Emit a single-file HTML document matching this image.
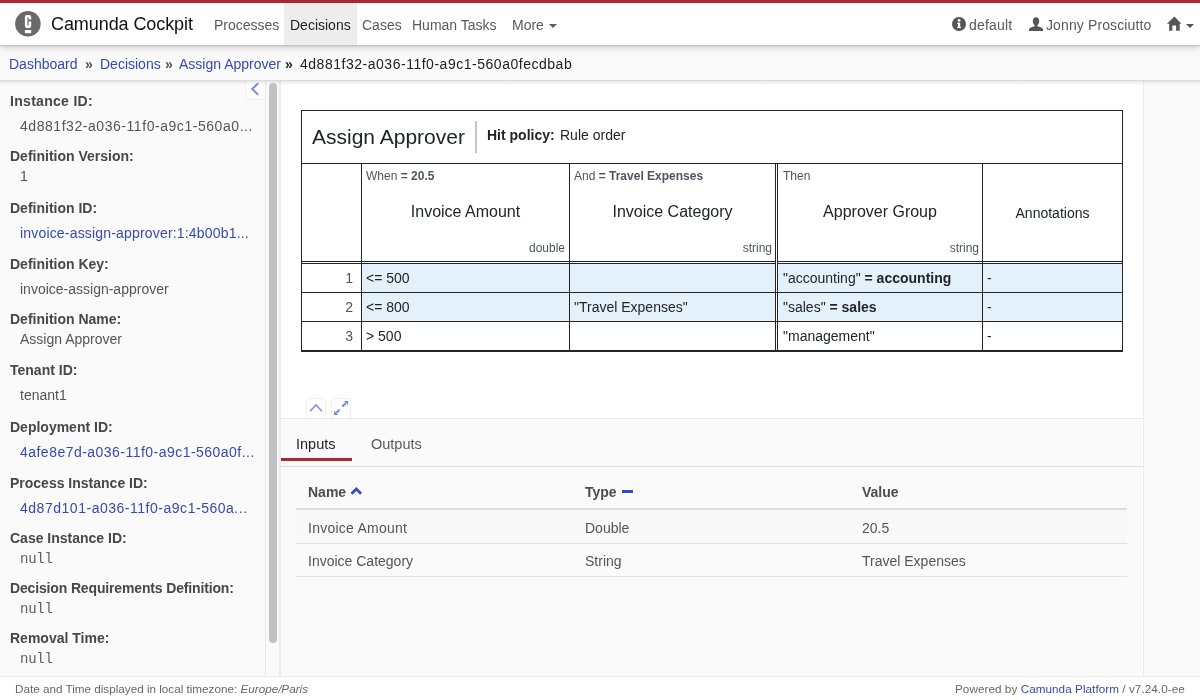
<!DOCTYPE html>
<html><head><meta charset="utf-8"><title>Camunda Cockpit</title>
<style>
html,body{margin:0;padding:0}
body{width:1200px;height:700px;overflow:hidden;position:relative;font-family:"Liberation Sans",sans-serif;background:#f9f9f9}
.t{position:absolute;white-space:nowrap;line-height:1;font-family:"Liberation Sans",sans-serif;will-change:transform}
</style></head><body>
<div style="position:absolute;left:0px;top:0px;width:1200px;height:700px;background:#fafafa"></div>
<div style="position:absolute;left:281px;top:80px;width:862px;height:338px;background:#fff"></div>
<div style="position:absolute;left:1142px;top:80px;width:1px;height:596px;background:#fff"></div>
<div style="position:absolute;left:1143px;top:80px;width:1px;height:596px;background:#ebebeb"></div>
<div style="position:absolute;left:265px;top:80px;width:1px;height:596px;background:#e8e8e8"></div>
<div style="position:absolute;left:279px;top:80px;width:2px;height:596px;background:#ececec"></div>
<div style="position:absolute;left:269px;top:83px;width:8px;height:560px;background:#c1c1c1;border-radius:4px"></div>
<div style="position:absolute;left:281px;top:418px;width:862px;height:1px;background:#e8e8e8"></div>
<div style="position:absolute;left:281px;top:466px;width:862px;height:1px;background:#dedede"></div>
<div style="position:absolute;left:0px;top:676px;width:1200px;height:24px;background:#fff;border-top:1px solid #e8e8e8;box-sizing:border-box"></div>
<div style="position:absolute;left:245px;top:80px;width:20px;height:20px;background:#fdfdfd;border-left:1px solid #eee;border-bottom:1px solid #eee;border-bottom-left-radius:4px;box-sizing:border-box"></div>
<svg style="position:absolute;left:250px;top:82px" width="10" height="14" viewBox="0 0 10 14"><path d="M8.2 1.2 L2.2 7 L8.2 12.8" fill="none" stroke="#7b8ed8" stroke-width="2"/></svg>
<div style="position:absolute;left:0px;top:79px;width:1200px;height:1px;background:#fcfcfc"></div>
<div style="position:absolute;left:0px;top:80px;width:1200px;height:1px;background:#dcdcdc"></div>
<div style="position:absolute;left:0;top:81px;width:1200px;height:4px;background:linear-gradient(rgba(0,0,0,.09),rgba(0,0,0,0))"></div>
<div style="position:absolute;left:0;top:0;width:1200px;height:45px;background:#fff;box-shadow:0 1px 2px rgba(0,0,0,.15), 0 2px 8px rgba(0,0,0,.2)"></div>
<div style="position:absolute;left:0px;top:0px;width:1200px;height:3px;background:#a62a30"></div>
<div style="position:absolute;left:284px;top:3px;width:73px;height:42px;background:#ededed"></div>
<svg style="position:absolute;left:15px;top:11px" width="26" height="26" viewBox="0 0 26 26"><circle cx="12.9" cy="12.8" r="12.8" fill="#6a6a6a"/><path d="M11.9 4 H14.2 Q16.2 4 16.2 6 V8.6 H13.6 V6.9 Q13.6 6.2 13 6.2 Q12.4 6.2 12.4 6.9 V14 Q12.4 14.6 13 14.6 Q13.6 14.6 13.6 14 V10.6 H16.2 V14.9 Q16.2 16.9 14.2 16.9 H11.9 Q9.9 16.9 9.9 14.9 V6 Q9.9 4 11.9 4 Z" fill="#fff"/><rect x="9.9" y="19" width="6.3" height="3.2" fill="#fff"/></svg>
<div class="t" style="left:51px;top:15px;font-size:18px;color:#111;font-family:'Liberation Sans',sans-serif;letter-spacing:-0.08px;">Camunda Cockpit</div>
<div class="t" style="left:214px;top:18px;font-size:14px;color:#5a5a5a;font-family:'Liberation Sans',sans-serif;">Processes</div>
<div class="t" style="left:290px;top:18px;font-size:14px;color:#222;font-family:'Liberation Sans',sans-serif;">Decisions</div>
<div class="t" style="left:362px;top:18px;font-size:14px;color:#5a5a5a;font-family:'Liberation Sans',sans-serif;">Cases</div>
<div class="t" style="left:412px;top:18px;font-size:14px;color:#5a5a5a;font-family:'Liberation Sans',sans-serif;">Human Tasks</div>
<div class="t" style="left:512px;top:18px;font-size:14px;color:#5a5a5a;font-family:'Liberation Sans',sans-serif;">More</div>
<div style="position:absolute;left:549px;top:24px;width:0;height:0;border-left:4px solid transparent;border-right:4px solid transparent;border-top:4px solid #5a5a5a"></div>
<svg style="position:absolute;left:952px;top:17px" width="14" height="14" viewBox="0 0 14 14"><circle cx="7" cy="7" r="7" fill="#555"/><rect x="6" y="5.8" width="2.2" height="5.2" fill="#fff"/><rect x="5.2" y="9.8" width="3.8" height="1.3" fill="#fff"/><rect x="5.2" y="5.8" width="2.5" height="1.2" fill="#fff"/><circle cx="7.1" cy="3.4" r="1.4" fill="#fff"/></svg>
<div class="t" style="left:969px;top:18px;font-size:14px;color:#5a5a5a;font-family:'Liberation Sans',sans-serif;letter-spacing:0.2px;">default</div>
<svg style="position:absolute;left:1029px;top:17px" width="14" height="14" viewBox="0 0 14 14"><path d="M7 0.3 C9 0.3 10.2 1.9 10.2 4.2 C10.2 6 9.3 7.6 8.4 8.2 L8.4 9.2 C11 9.8 13.6 10.9 14 12.2 L14 14 L0 14 L0 12.2 C0.4 10.9 3 9.8 5.6 9.2 L5.6 8.2 C4.7 7.6 3.8 6 3.8 4.2 C3.8 1.9 5 0.3 7 0.3 Z" fill="#555"/></svg>
<div class="t" style="left:1046px;top:18px;font-size:14px;color:#5a5a5a;font-family:'Liberation Sans',sans-serif;letter-spacing:0.12px;">Jonny Prosciutto</div>
<svg style="position:absolute;left:1166px;top:15px" width="17" height="17" viewBox="0 0 17 17"><path d="M8.4 1.6 L15.4 8.7 L13.7 8.7 L13.7 15.7 L10.1 15.7 L10.1 10.5 L6.3 10.5 L6.3 15.7 L3.2 15.7 L3.2 8.7 L1 8.7 Z" fill="#555"/></svg>
<div style="position:absolute;left:1186px;top:24px;width:0;height:0;border-left:4px solid transparent;border-right:4px solid transparent;border-top:4px solid #555"></div>
<div class="t" style="left:9px;top:57px;font-size:14px;color:#3649b5;font-family:'Liberation Sans',sans-serif;">Dashboard</div>
<div class="t" style="left:85px;top:57px;font-size:14px;color:#555;font-family:'Liberation Sans',sans-serif;font-weight:bold;">&raquo;</div>
<div class="t" style="left:100px;top:57px;font-size:14px;color:#3649b5;font-family:'Liberation Sans',sans-serif;">Decisions</div>
<div class="t" style="left:165px;top:57px;font-size:14px;color:#555;font-family:'Liberation Sans',sans-serif;font-weight:bold;">&raquo;</div>
<div class="t" style="left:179px;top:57px;font-size:14px;color:#3649b5;font-family:'Liberation Sans',sans-serif;">Assign Approver</div>
<div class="t" style="left:285px;top:57px;font-size:14px;color:#222;font-family:'Liberation Sans',sans-serif;font-weight:bold;">&raquo;</div>
<div class="t" style="left:300px;top:57px;font-size:14px;color:#222;font-family:'Liberation Sans',sans-serif;letter-spacing:0.52px;">4d881f32-a036-11f0-a9c1-560a0fecdbab</div>
<div class="t" style="left:10px;top:94px;font-size:14px;color:#474747;font-family:'Liberation Sans',sans-serif;font-weight:bold;letter-spacing:0.3px;">Instance ID:</div>
<div class="t" style="left:20px;top:119px;font-size:14px;color:#555;font-family:'Liberation Sans',sans-serif;letter-spacing:0.55px;">4d881f32-a036-11f0-a9c1-560a0...</div>
<div class="t" style="left:10px;top:149px;font-size:14px;color:#474747;font-family:'Liberation Sans',sans-serif;font-weight:bold;">Definition Version:</div>
<div class="t" style="left:20px;top:169px;font-size:14px;color:#555;font-family:'Liberation Sans',sans-serif;">1</div>
<div class="t" style="left:10px;top:201px;font-size:14px;color:#474747;font-family:'Liberation Sans',sans-serif;font-weight:bold;">Definition ID:</div>
<div class="t" style="left:20px;top:226px;font-size:14px;color:#3649b5;font-family:'Liberation Sans',sans-serif;letter-spacing:0.18px;">invoice-assign-approver:1:4b00b1...</div>
<div class="t" style="left:10px;top:257px;font-size:14px;color:#474747;font-family:'Liberation Sans',sans-serif;font-weight:bold;">Definition Key:</div>
<div class="t" style="left:20px;top:282px;font-size:14px;color:#555;font-family:'Liberation Sans',sans-serif;">invoice-assign-approver</div>
<div class="t" style="left:10px;top:312px;font-size:14px;color:#474747;font-family:'Liberation Sans',sans-serif;font-weight:bold;">Definition Name:</div>
<div class="t" style="left:20px;top:332px;font-size:14px;color:#555;font-family:'Liberation Sans',sans-serif;">Assign Approver</div>
<div class="t" style="left:10px;top:363px;font-size:14px;color:#474747;font-family:'Liberation Sans',sans-serif;font-weight:bold;">Tenant ID:</div>
<div class="t" style="left:20px;top:388px;font-size:14px;color:#555;font-family:'Liberation Sans',sans-serif;">tenant1</div>
<div class="t" style="left:10px;top:420px;font-size:14px;color:#474747;font-family:'Liberation Sans',sans-serif;font-weight:bold;">Deployment ID:</div>
<div class="t" style="left:20px;top:445px;font-size:14px;color:#3649b5;font-family:'Liberation Sans',sans-serif;letter-spacing:0.47px;">4afe8e7d-a036-11f0-a9c1-560a0f...</div>
<div class="t" style="left:10px;top:476px;font-size:14px;color:#474747;font-family:'Liberation Sans',sans-serif;font-weight:bold;">Process Instance ID:</div>
<div class="t" style="left:20px;top:501px;font-size:14px;color:#3649b5;font-family:'Liberation Sans',sans-serif;letter-spacing:0.52px;">4d87d101-a036-11f0-a9c1-560a...</div>
<div class="t" style="left:10px;top:531px;font-size:14px;color:#474747;font-family:'Liberation Sans',sans-serif;font-weight:bold;">Case Instance ID:</div>
<div class="t" style="left:20px;top:552px;font-size:14px;color:#5e5e5e;font-family:'Liberation Mono',monospace;letter-spacing:-0.25px;">null</div>
<div class="t" style="left:10px;top:581px;font-size:14px;color:#474747;font-family:'Liberation Sans',sans-serif;font-weight:bold;letter-spacing:-0.15px;">Decision Requirements Definition:</div>
<div class="t" style="left:20px;top:602px;font-size:14px;color:#5e5e5e;font-family:'Liberation Mono',monospace;letter-spacing:-0.25px;">null</div>
<div class="t" style="left:10px;top:631px;font-size:14px;color:#474747;font-family:'Liberation Sans',sans-serif;font-weight:bold;">Removal Time:</div>
<div class="t" style="left:20px;top:652px;font-size:14px;color:#5e5e5e;font-family:'Liberation Mono',monospace;letter-spacing:-0.25px;">null</div>
<div style="position:absolute;left:301px;top:110px;width:822px;height:1px;background:#22242a"></div>
<div style="position:absolute;left:301px;top:110px;width:1px;height:242px;background:#22242a"></div>
<div style="position:absolute;left:1122px;top:110px;width:1px;height:242px;background:#22242a"></div>
<div style="position:absolute;left:301px;top:350px;width:822px;height:2px;background:#22242a"></div>
<div style="position:absolute;left:301px;top:163px;width:822px;height:1px;background:#22242a"></div>
<div style="position:absolute;left:301px;top:261px;width:822px;height:1px;background:#22242a"></div>
<div style="position:absolute;left:301px;top:263px;width:822px;height:1px;background:#22242a"></div>
<div style="position:absolute;left:301px;top:292px;width:822px;height:1px;background:#22242a"></div>
<div style="position:absolute;left:301px;top:321px;width:822px;height:1px;background:#22242a"></div>
<div style="position:absolute;left:362px;top:264px;width:413px;height:28px;background:#e4f0fa"></div>
<div style="position:absolute;left:778px;top:264px;width:344px;height:28px;background:#e4f0fa"></div>
<div style="position:absolute;left:362px;top:293px;width:413px;height:28px;background:#e4f0fa"></div>
<div style="position:absolute;left:778px;top:293px;width:344px;height:28px;background:#e4f0fa"></div>
<div style="position:absolute;left:362px;top:264px;width:0px;height:0px;"></div>
<div style="position:absolute;left:361px;top:163px;width:1px;height:188px;background:#22242a"></div>
<div style="position:absolute;left:569px;top:163px;width:1px;height:188px;background:#22242a"></div>
<div style="position:absolute;left:775px;top:163px;width:1px;height:188px;background:#22242a"></div>
<div style="position:absolute;left:777px;top:163px;width:1px;height:188px;background:#22242a"></div>
<div style="position:absolute;left:776px;top:261px;width:1px;height:3px;background:#fff"></div>
<div style="position:absolute;left:982px;top:163px;width:1px;height:188px;background:#22242a"></div>
<div class="t" style="left:312px;top:126px;font-size:21px;color:#22242a;font-family:'Liberation Sans',sans-serif;">Assign Approver</div>
<div style="position:absolute;left:475px;top:121px;width:2px;height:32px;background:#c4c5d2"></div>
<div class="t" style="left:487px;top:128px;font-size:14px;color:#22242a;font-family:'Liberation Sans',sans-serif;"><b>Hit policy:</b></div>
<div class="t" style="left:560px;top:128px;font-size:14px;color:#22242a;font-family:'Liberation Sans',sans-serif;">Rule order</div>
<div class="t" style="left:366px;top:170px;font-size:12px;color:#51535f;font-family:'Liberation Sans',sans-serif;">When <b>= 20.5</b></div>
<div class="t" style="left:574px;top:170px;font-size:12px;color:#51535f;font-family:'Liberation Sans',sans-serif;">And <b>= Travel Expenses</b></div>
<div class="t" style="left:783px;top:170px;font-size:12px;color:#51535f;font-family:'Liberation Sans',sans-serif;">Then</div>
<div class="t" style="left:362px;top:204px;width:207px;text-align:center;font-size:16px;color:#22242a">Invoice Amount</div>
<div class="t" style="left:570px;top:204px;width:205px;text-align:center;font-size:16px;color:#22242a">Invoice Category</div>
<div class="t" style="left:778px;top:204px;width:204px;text-align:center;font-size:16px;color:#22242a">Approver Group</div>
<div class="t" style="left:983px;top:206px;width:139px;text-align:center;font-size:14px;color:#22242a">Annotations</div>
<div class="t" style="left:362px;top:242px;width:203px;text-align:right;font-size:12px;color:#51535f">double</div>
<div class="t" style="left:570px;top:242px;width:202px;text-align:right;font-size:12px;color:#51535f">string</div>
<div class="t" style="left:778px;top:242px;width:201px;text-align:right;font-size:12px;color:#51535f">string</div>
<div class="t" style="left:302px;top:271px;width:51px;text-align:right;font-size:14px;color:#555">1</div>
<div class="t" style="left:987px;top:271px;font-size:14px;color:#22242a;font-family:'Liberation Sans',sans-serif;">-</div>
<div class="t" style="left:302px;top:300px;width:51px;text-align:right;font-size:14px;color:#555">2</div>
<div class="t" style="left:987px;top:300px;font-size:14px;color:#22242a;font-family:'Liberation Sans',sans-serif;">-</div>
<div class="t" style="left:302px;top:329px;width:51px;text-align:right;font-size:14px;color:#555">3</div>
<div class="t" style="left:987px;top:329px;font-size:14px;color:#22242a;font-family:'Liberation Sans',sans-serif;">-</div>
<div class="t" style="left:366px;top:271px;font-size:14px;color:#22242a;font-family:'Liberation Sans',sans-serif;">&lt;= 500</div>
<div class="t" style="left:366px;top:300px;font-size:14px;color:#22242a;font-family:'Liberation Sans',sans-serif;">&lt;= 800</div>
<div class="t" style="left:366px;top:329px;font-size:14px;color:#22242a;font-family:'Liberation Sans',sans-serif;">&gt; 500</div>
<div class="t" style="left:574px;top:300px;font-size:14px;color:#22242a;font-family:'Liberation Sans',sans-serif;">"Travel Expenses"</div>
<div class="t" style="left:783px;top:271px;font-size:14px;color:#22242a;font-family:'Liberation Sans',sans-serif;">"accounting" <b>= accounting</b></div>
<div class="t" style="left:783px;top:300px;font-size:14px;color:#22242a;font-family:'Liberation Sans',sans-serif;">"sales" <b>= sales</b></div>
<div class="t" style="left:783px;top:329px;font-size:14px;color:#22242a;font-family:'Liberation Sans',sans-serif;">"management"</div>
<div style="position:absolute;left:306px;top:398px;width:20px;height:21px;background:#fff;border:1px solid #eee;border-bottom:none;border-radius:4px 4px 0 0;box-sizing:border-box"></div>
<div style="position:absolute;left:331px;top:398px;width:20px;height:21px;background:#fff;border:1px solid #eee;border-bottom:none;border-radius:4px 4px 0 0;box-sizing:border-box"></div>
<div style="position:absolute;left:281px;top:418px;width:862px;height:1px;background:#e8e8e8"></div>
<svg style="position:absolute;left:306px;top:398px" width="20" height="20" viewBox="0 0 20 20"><path d="M4 13.2 L10 6.9 L15.9 13.2" fill="none" stroke="#7f92d9" stroke-width="1.6"/></svg>
<svg style="position:absolute;left:331px;top:398px" width="20" height="20" viewBox="0 0 20 20"><path d="M17.1 2.9 L12.9 2.9 L17.1 7.1 Z M3.1 16.9 L3.1 12.7 L7.3 16.9 Z" fill="#7388d6"/><path d="M11.3 8.5 L14.6 5.2 M8.7 11.6 L5.4 14.9" stroke="#7388d6" stroke-width="2"/></svg>
<div class="t" style="left:296px;top:437px;font-size:14.5px;color:#222;font-family:'Liberation Sans',sans-serif;">Inputs</div>
<div class="t" style="left:371px;top:437px;font-size:14.5px;color:#5a5a5a;font-family:'Liberation Sans',sans-serif;">Outputs</div>
<div style="position:absolute;left:281px;top:458px;width:71px;height:3px;background:#a62a30"></div>
<div class="t" style="left:308px;top:485px;font-size:14px;color:#4d4d4d;font-family:'Liberation Sans',sans-serif;font-weight:bold;">Name</div>
<svg style="position:absolute;left:349px;top:485px" width="15" height="12" viewBox="0 0 15 12"><path d="M2.5 8.8 L7.3 4 L12.1 8.8" fill="none" stroke="#3a4db8" stroke-width="2.8"/></svg>
<div class="t" style="left:585px;top:485px;font-size:14px;color:#4d4d4d;font-family:'Liberation Sans',sans-serif;font-weight:bold;">Type</div>
<div style="position:absolute;left:622px;top:490px;width:11px;height:3px;background:#3649b5"></div>
<div class="t" style="left:862px;top:485px;font-size:14px;color:#4d4d4d;font-family:'Liberation Sans',sans-serif;font-weight:bold;">Value</div>
<div style="position:absolute;left:296px;top:508px;width:831px;height:2px;background:#dcdcdc"></div>
<div style="position:absolute;left:296px;top:510px;width:831px;height:33px;background:#f8f8f8"></div>
<div style="position:absolute;left:296px;top:543px;width:831px;height:1px;background:#e2e2e2"></div>
<div style="position:absolute;left:296px;top:576px;width:831px;height:1px;background:#e2e2e2"></div>
<div class="t" style="left:308px;top:521px;font-size:14px;color:#555;font-family:'Liberation Sans',sans-serif;letter-spacing:0.25px;">Invoice Amount</div>
<div class="t" style="left:585px;top:521px;font-size:14px;color:#555;font-family:'Liberation Sans',sans-serif;">Double</div>
<div class="t" style="left:862px;top:521px;font-size:14px;color:#555;font-family:'Liberation Sans',sans-serif;">20.5</div>
<div class="t" style="left:308px;top:554px;font-size:14px;color:#555;font-family:'Liberation Sans',sans-serif;">Invoice Category</div>
<div class="t" style="left:585px;top:554px;font-size:14px;color:#555;font-family:'Liberation Sans',sans-serif;">String</div>
<div class="t" style="left:862px;top:554px;font-size:14px;color:#555;font-family:'Liberation Sans',sans-serif;">Travel Expenses</div>
<div class="t" style="left:15px;top:683px;font-size:11.7px;color:#666;font-family:'Liberation Sans',sans-serif;">Date and Time displayed in local timezone: <i>Europe/Paris</i></div>
<div class="t" style="left:955px;top:683px;font-size:11.7px;color:#666;font-family:'Liberation Sans',sans-serif;letter-spacing:0.06px;">Powered by <span style="color:#3649b5">Camunda Platform</span> / v7.24.0-ee</div>
</body></html>
